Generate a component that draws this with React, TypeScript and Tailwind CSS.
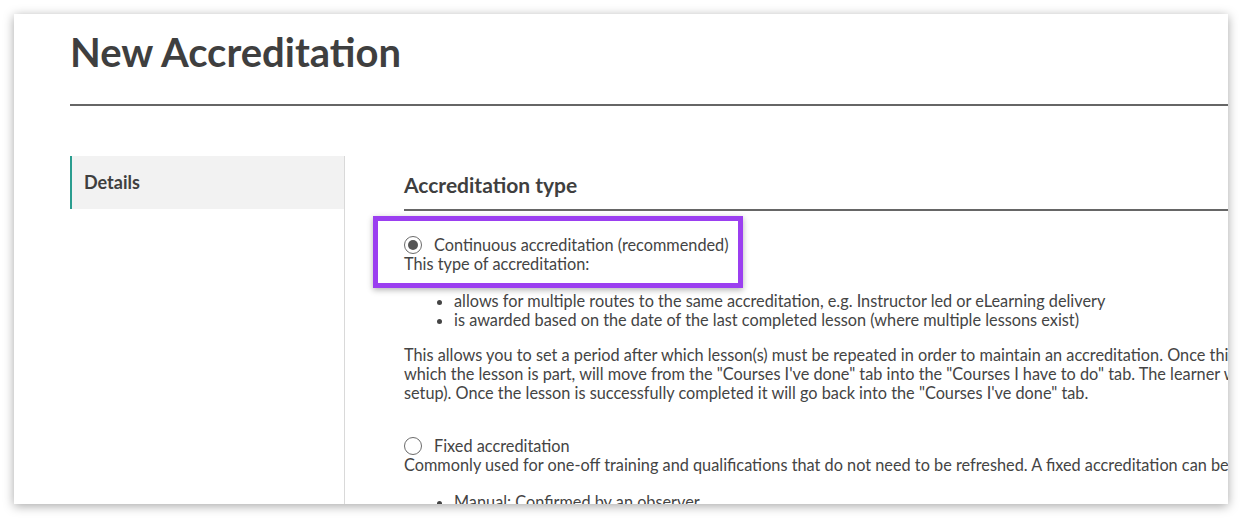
import { useState } from "react";

function Radio({ checked }: { checked?: boolean }) {
  return (
    <span className="flex h-[18px] w-[18px] shrink-0 items-center justify-center rounded-full border border-[#6b6b6b] bg-white">
      {checked && <span className="h-[10px] w-[10px] rounded-full bg-[#555]" />}
    </span>
  );
}

export default function App() {
  const [type, setType] = useState<"continuous" | "fixed">("continuous");

  return (
    <div className="h-[518px] w-[1242px] overflow-hidden bg-white p-[14px] font-['Lato',sans-serif] text-[#444]">
      <div className="h-[490px] w-[1214px] overflow-hidden bg-white pl-[56px] shadow-[0_2px_10px_rgba(0,0,0,0.35)]">
        {/* Page title */}
        <div className="border-b-2 border-[#666] pt-[14px] pb-[28px]">
          <h1 className="text-[40px] leading-[48px] font-bold text-[#3f3f3f]">New Accreditation</h1>
        </div>

        <div className="mt-[50px] flex h-[400px]">
          {/* Side nav */}
          <div className="w-[275px] shrink-0 border-r border-[#d9d9d9]">
            <div className="flex h-[53px] items-center border-l-2 border-[#2a9d8f] bg-[#f2f2f2] pl-3 text-[18px] font-bold text-[#3f3f3f]">
              Details
            </div>
          </div>

          {/* Form */}
          <div className="relative min-w-0 flex-1 pt-[17px] pl-[59px] text-[16.3px] leading-[19px]">
            <h2 className="border-b-2 border-[#666] pb-3 text-[21px] leading-[24px] font-bold text-[#3f3f3f]">
              Accreditation type
            </h2>

            <div className="pt-[24px]">
              <label className="flex cursor-pointer items-center gap-[12px] whitespace-nowrap" onClick={() => setType("continuous")}>
                <Radio checked={type === "continuous"} />
                <span>Continuous accreditation (recommended)</span>
              </label>
              <p className="whitespace-nowrap">This type of accreditation:</p>
              <ul className="mt-[18px] list-disc pl-[50px] whitespace-nowrap">
                <li>allows for multiple routes to the same accreditation, e.g. Instructor led or eLearning delivery</li>
                <li>is awarded based on the date of the last completed lesson (where multiple lessons exist)</li>
              </ul>
              <p className="mt-[16px] whitespace-nowrap">
                <span className="block">
                  This allows you to set a period after which lesson(s) must be repeated in order to maintain an accreditation. Once this period has passed, the course of
                </span>
                <span className="block">
                  which the lesson is part, will move from the "Courses I've done" tab into the "Courses I have to do" tab. The learner will be notified by email (if
                </span>
                <span className="block">
                  setup). Once the lesson is successfully completed it will go back into the "Courses I've done" tab.
                </span>
              </p>
            </div>

            <div className="pt-[34px]">
              <label className="flex cursor-pointer items-center gap-[12px] whitespace-nowrap" onClick={() => setType("fixed")}>
                <Radio checked={type === "fixed"} />
                <span>Fixed accreditation</span>
              </label>
              <p className="whitespace-nowrap">
                Commonly used for one-off training and qualifications that do not need to be refreshed. A fixed accreditation can be awarded in one of two ways:
              </p>
              <ul className="mt-[18px] list-disc pl-[50px] whitespace-nowrap">
                <li>Manual: Confirmed by an observer</li>
                <li>Automatic: Awarded when the lesson is completed</li>
              </ul>
            </div>

            {/* Highlight annotation */}
            <div className="pointer-events-none absolute top-[60px] left-[28px] h-[72px] w-[370px] border-[5px] border-[#9b3ff0] shadow-[0_2px_6px_rgba(0,0,0,0.3)]" />
          </div>
        </div>
      </div>
    </div>
  );
}
